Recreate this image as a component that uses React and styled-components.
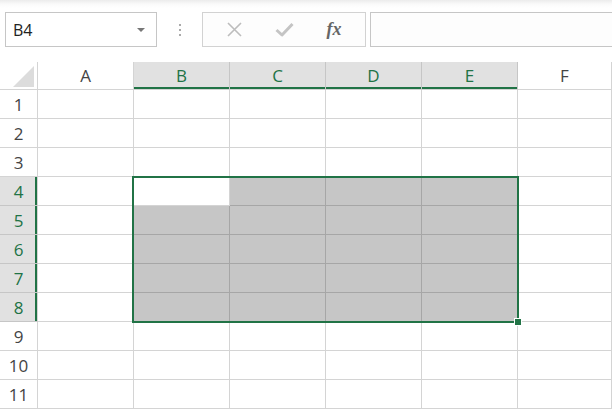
import React from "react";
import styled, { createGlobalStyle } from "styled-components";

const Global = createGlobalStyle`
  html, body { margin: 0; padding: 0; background: #fff; }
  body { font-family: "Open Sans", "Noto Sans", "Liberation Sans", sans-serif; overflow: hidden; }
`;

const GREEN = "#217346";

const Page = styled.div`
  width: 612px;
  height: 413px;
  overflow: hidden;
  background: #fff;
`;

const TopBar = styled.div`
  height: 62px;
  box-sizing: border-box;
  padding: 12px 0 0 5px;
  display: flex;
  align-items: flex-start;
  background: linear-gradient(#ececec 0px, #fafafa 4px, #fff 8px);
`;

const NameBox = styled.div`
  width: 152px;
  height: 35px;
  box-sizing: border-box;
  border: 1px solid #c6c6c6;
  background: #fff;
  display: flex;
  align-items: center;
  justify-content: space-between;
  padding: 0 11px 0 7px;
  font-size: 16px;
  color: #222;
`;

const Caret = styled.span`
  width: 0;
  height: 0;
  border-left: 4px solid transparent;
  border-right: 4px solid transparent;
  border-top: 4px solid #777;
`;

const Dots = styled.div`
  width: 45px;
  height: 35px;
  display: flex;
  flex-direction: column;
  align-items: center;
  justify-content: center;
  gap: 3px;
  span { width: 2px; height: 2px; background: #aaa; display: block; }
`;

const FxBox = styled.div`
  width: 164px;
  height: 35px;
  box-sizing: border-box;
  border: 1px solid #d2d2d2;
  background: #fdfdfd;
  display: flex;
  align-items: center;
  justify-content: space-around;
  padding: 0 6px;
`;

const FxIcon = styled.span`
  width: 40px;
  display: flex;
  justify-content: center;
  align-items: center;
  font-family: "Liberation Serif", "DejaVu Serif", serif;
  font-style: italic;
  font-weight: bold;
  font-size: 18px;
  color: #666;
`;

const FormulaInput = styled.div`
  flex: 1;
  height: 35px;
  margin-left: 4px;
  box-sizing: border-box;
  border: 1px solid #c6c6c6;
  border-right: none;
  background: #fdfdfd;
`;

const SheetWrap = styled.div`
  position: relative;
`;

const Grid = styled.div`
  display: grid;
  grid-template-columns: 38px repeat(5, 96px) 94px;
  grid-template-rows: 28px repeat(11, 29px);
`;

const Corner = styled.div`
  box-sizing: border-box;
  border-right: 1px solid #d4d4d4;
  border-bottom: 1px solid #d4d4d4;
  position: relative;
  background: #fff;
  &::after {
    content: "";
    position: absolute;
    right: 3px;
    bottom: 2px;
    width: 0;
    height: 0;
    border-left: 21px solid transparent;
    border-bottom: 21px solid #dcdcdc;
  }
`;

const ColHead = styled.div`
  box-sizing: border-box;
  border-right: 1px solid ${(p) => (p.$sel ? "#c6c6c6" : "#d4d4d4")};
  border-bottom: 1px solid #d4d4d4;
  background: ${(p) => (p.$sel ? "#e1e1e1" : "#fff")};
  color: ${(p) => (p.$sel ? GREEN : "#444")};
  box-shadow: ${(p) => (p.$sel ? `inset 0 -2px 0 ${GREEN}` : "none")};
  display: flex;
  align-items: center;
  justify-content: center;
  font-size: 17px;
  padding-bottom: 1px;
`;

const RowHead = styled.div`
  box-sizing: border-box;
  border-right: 1px solid #d4d4d4;
  border-bottom: 1px solid ${(p) => (p.$sel ? "#c6c6c6" : "#d4d4d4")};
  background: ${(p) => (p.$sel ? "#e1e1e1" : "#fff")};
  color: ${(p) => (p.$sel ? GREEN : "#444")};
  box-shadow: ${(p) => (p.$sel ? `inset -2px 0 0 ${GREEN}` : "none")};
  display: flex;
  align-items: center;
  justify-content: center;
  font-size: 17px;
`;

const Cell = styled.div`
  box-sizing: border-box;
  border-right: 1px solid ${(p) => (p.$fill ? "#a6a6a6" : "#d4d4d4")};
  border-bottom: 1px solid ${(p) => (p.$fill ? "#a6a6a6" : "#d4d4d4")};
  background: ${(p) => (p.$fill ? "#c6c6c6" : "#fff")};
`;

const Selection = styled.div`
  position: absolute;
  left: 132px;
  top: 114px;
  width: 387px;
  height: 147px;
  box-sizing: border-box;
  border: 2px solid ${GREEN};
  pointer-events: none;
`;

const Handle = styled.div`
  position: absolute;
  right: -5px;
  bottom: -5px;
  width: 6px;
  height: 6px;
  background: ${GREEN};
  border: 1px solid #fff;
`;

const cols = ["A", "B", "C", "D", "E", "F"];

export default function App() {
  const cells = [];
  for (let r = 1; r <= 11; r++) {
    const rowSel = r >= 4 && r <= 8;
    cells.push(
      <RowHead key={`h${r}`} $sel={rowSel}>
        {r}
      </RowHead>
    );
    cols.forEach((c, i) => {
      const colSel = i >= 1 && i <= 4;
      const fill = rowSel && colSel && !(r === 4 && i === 1);
      cells.push(<Cell key={`${c}${r}`} $fill={fill} />);
    });
  }
  return (
    <Page>
      <Global />
      <TopBar>
        <NameBox>
          <span>B4</span>
          <Caret />
        </NameBox>
        <Dots>
          <span />
          <span />
          <span />
        </Dots>
        <FxBox>
          <FxIcon>
            <svg width="17" height="17" viewBox="0 0 17 17">
              <path d="M2 2 L15 15 M15 2 L2 15" stroke="#bdbdbd" strokeWidth="1.6" fill="none" />
            </svg>
          </FxIcon>
          <FxIcon>
            <svg width="19" height="15" viewBox="0 0 19 15">
              <path d="M1.5 8 L7 13 L17.5 2" stroke="#c4c4c4" strokeWidth="3" fill="none" strokeLinejoin="round" />
            </svg>
          </FxIcon>
          <FxIcon>fx</FxIcon>
        </FxBox>
        <FormulaInput />
      </TopBar>
      <SheetWrap>
        <Grid>
          <Corner />
          {cols.map((c, i) => (
            <ColHead key={c} $sel={i >= 1 && i <= 4}>
              {c}
            </ColHead>
          ))}
          {cells}
        </Grid>
        <Selection>
          <Handle />
        </Selection>
      </SheetWrap>
    </Page>
  );
}
